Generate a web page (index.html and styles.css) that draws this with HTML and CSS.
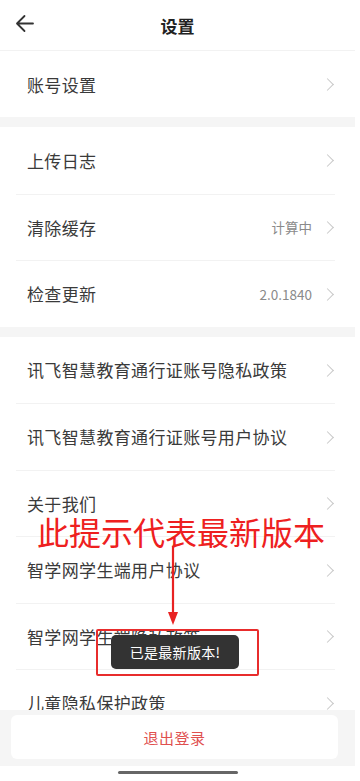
FILE: index.html
```html
<!DOCTYPE html>
<html lang="zh-CN">
<head>
<meta charset="utf-8">
<meta name="viewport" content="width=device-width, initial-scale=1">
<title>设置</title>
<link rel="stylesheet" href="styles.css">
</head>
<body>
<div class="page">
  <header class="topbar">
    <svg class="back" width="20" height="20" viewBox="0 0 20 20"><path d="M18 9.5H2.5M9.5 2L2 9.5L9.5 17" fill="none" stroke="#333" stroke-width="1.8" stroke-linecap="round" stroke-linejoin="round"/></svg>
    <h1 class="title">设置</h1>
  </header>
  <div class="list">
    <section class="group">
      <div class="row first"><span class="label">账号设置</span><span class="chev"></span></div>
    </section>
    <div class="band"></div>
    <section class="group">
      <div class="row"><span class="label">上传日志</span><span class="chev"></span></div>
      <div class="row"><span class="label">清除缓存</span><span class="value">计算中</span><span class="chev"></span></div>
      <div class="row"><span class="label">检查更新</span><span class="value">2.0.1840</span><span class="chev"></span></div>
    </section>
    <div class="band"></div>
    <section class="group">
      <div class="row"><span class="label">讯飞智慧教育通行证账号隐私政策</span><span class="chev"></span></div>
      <div class="row"><span class="label">讯飞智慧教育通行证账号用户协议</span><span class="chev"></span></div>
      <div class="row"><span class="label">关于我们</span><span class="chev"></span></div>
      <div class="row"><span class="label">智学网学生端用户协议</span><span class="chev"></span></div>
      <div class="row"><span class="label">智学网学生端隐私政策</span><span class="chev"></span></div>
      <div class="row"><span class="label">儿童隐私保护政策</span><span class="chev"></span></div>
    </section>
  </div>
  <div class="footer">
    <div class="logout">退出登录</div>
  </div>
  <div class="home"><span class="indicator"></span></div>

  <div class="note">此提示代表最新版本</div>
  <svg class="arrow" width="12" height="80" viewBox="0 0 12 80"><path d="M6 0V68" stroke="#e82222" stroke-width="2.2"/><path d="M1 66L6 79L11 66Z" fill="#e82222"/></svg>
  <div class="mark"></div>
  <div class="toast">已是最新版本!</div>
</div>
</body>
</html>
```

FILE: styles.css
```css
* { box-sizing: border-box; margin: 0; padding: 0; }
html, body { background: #fff; }
body {
  font-family: "Noto Sans CJK SC", "Noto Sans", Roboto, sans-serif;
  color: #333;
}
.page {
  position: relative;
  width: 355px;
  height: 781px;
  background: #fff;
  display: flex;
  flex-direction: column;
}
.topbar {
  height: 51px;
  flex: none;
  border-bottom: 1px solid #f2f2f2;
  display: flex;
  align-items: center;
  padding-left: 15px;
  position: relative;
}
.back { flex: none; margin-top: -2px; }
.title {
  position: absolute;
  left: 0; right: 0;
  top: 1px;
  height: 50px;
  line-height: 50px;
  text-align: center;
  font-size: 17px;
  font-weight: 700;
  color: #222;
  pointer-events: none;
}
.list {
  height: 659px;
  flex: none;
  overflow: hidden;
}
.band { height: 10px; background: #f5f5f5; }
.group { background: #fff; }
.row {
  height: 66.5px;
  margin: 0 20px 0 16px;
  padding: 0 1px 0 11px;
  display: flex;
  align-items: center;
  border-top: 1px solid #f2f2f2;
}
.row:first-child { border-top: 0; }
.row.first { height: 66px; }
.label {
  flex: 1;
  font-size: 17px;
  letter-spacing: 0.35px;
  color: #3a3a3a;
  white-space: nowrap;
}
.value {
  font-size: 13.5px;
  color: #8a8a8a;
  margin-right: 14px;
}
.chev {
  width: 8px;
  height: 13px;
  flex: none;
  position: relative;
}
.chev::before {
  content: "";
  position: absolute;
  left: -3px;
  top: 2.5px;
  width: 8px;
  height: 8px;
  border-top: 1.4px solid #c8c8c8;
  border-right: 1.4px solid #c8c8c8;
  transform: rotate(45deg);
}
.footer {
  flex: none;
  background: #f5f5f5;
  padding: 5px 17px 7px 11px;
}
.logout {
  height: 44px;
  background: #fff;
  border-radius: 6px;
  display: flex;
  align-items: center;
  justify-content: center;
  font-size: 15px;
  color: #e0504f;
  letter-spacing: 0.5px;
}
.home {
  flex: 1;
  display: flex;
  justify-content: center;
  padding-top: 5px;
}
.indicator {
  width: 120px;
  height: 3px;
  border-radius: 2px;
  background: #666;
}
.note {
  position: absolute;
  left: 37px;
  top: 512px;
  font-size: 32px;
  line-height: 38px;
  font-weight: 400;
  color: #ee2020;
  white-space: nowrap;
}
.arrow {
  position: absolute;
  left: 167px;
  top: 546px;
}
.mark {
  position: absolute;
  left: 96px;
  top: 629px;
  width: 163px;
  height: 47px;
  border: 2.5px solid #e82c2c;
  border-radius: 2px;
}
.toast {
  position: absolute;
  left: 111px;
  top: 635px;
  width: 128px;
  height: 34px;
  background: #333;
  border-radius: 5px;
  color: #fff;
  font-size: 14px;
  display: flex;
  align-items: center;
  justify-content: center;
  letter-spacing: 0.3px;
}
```
